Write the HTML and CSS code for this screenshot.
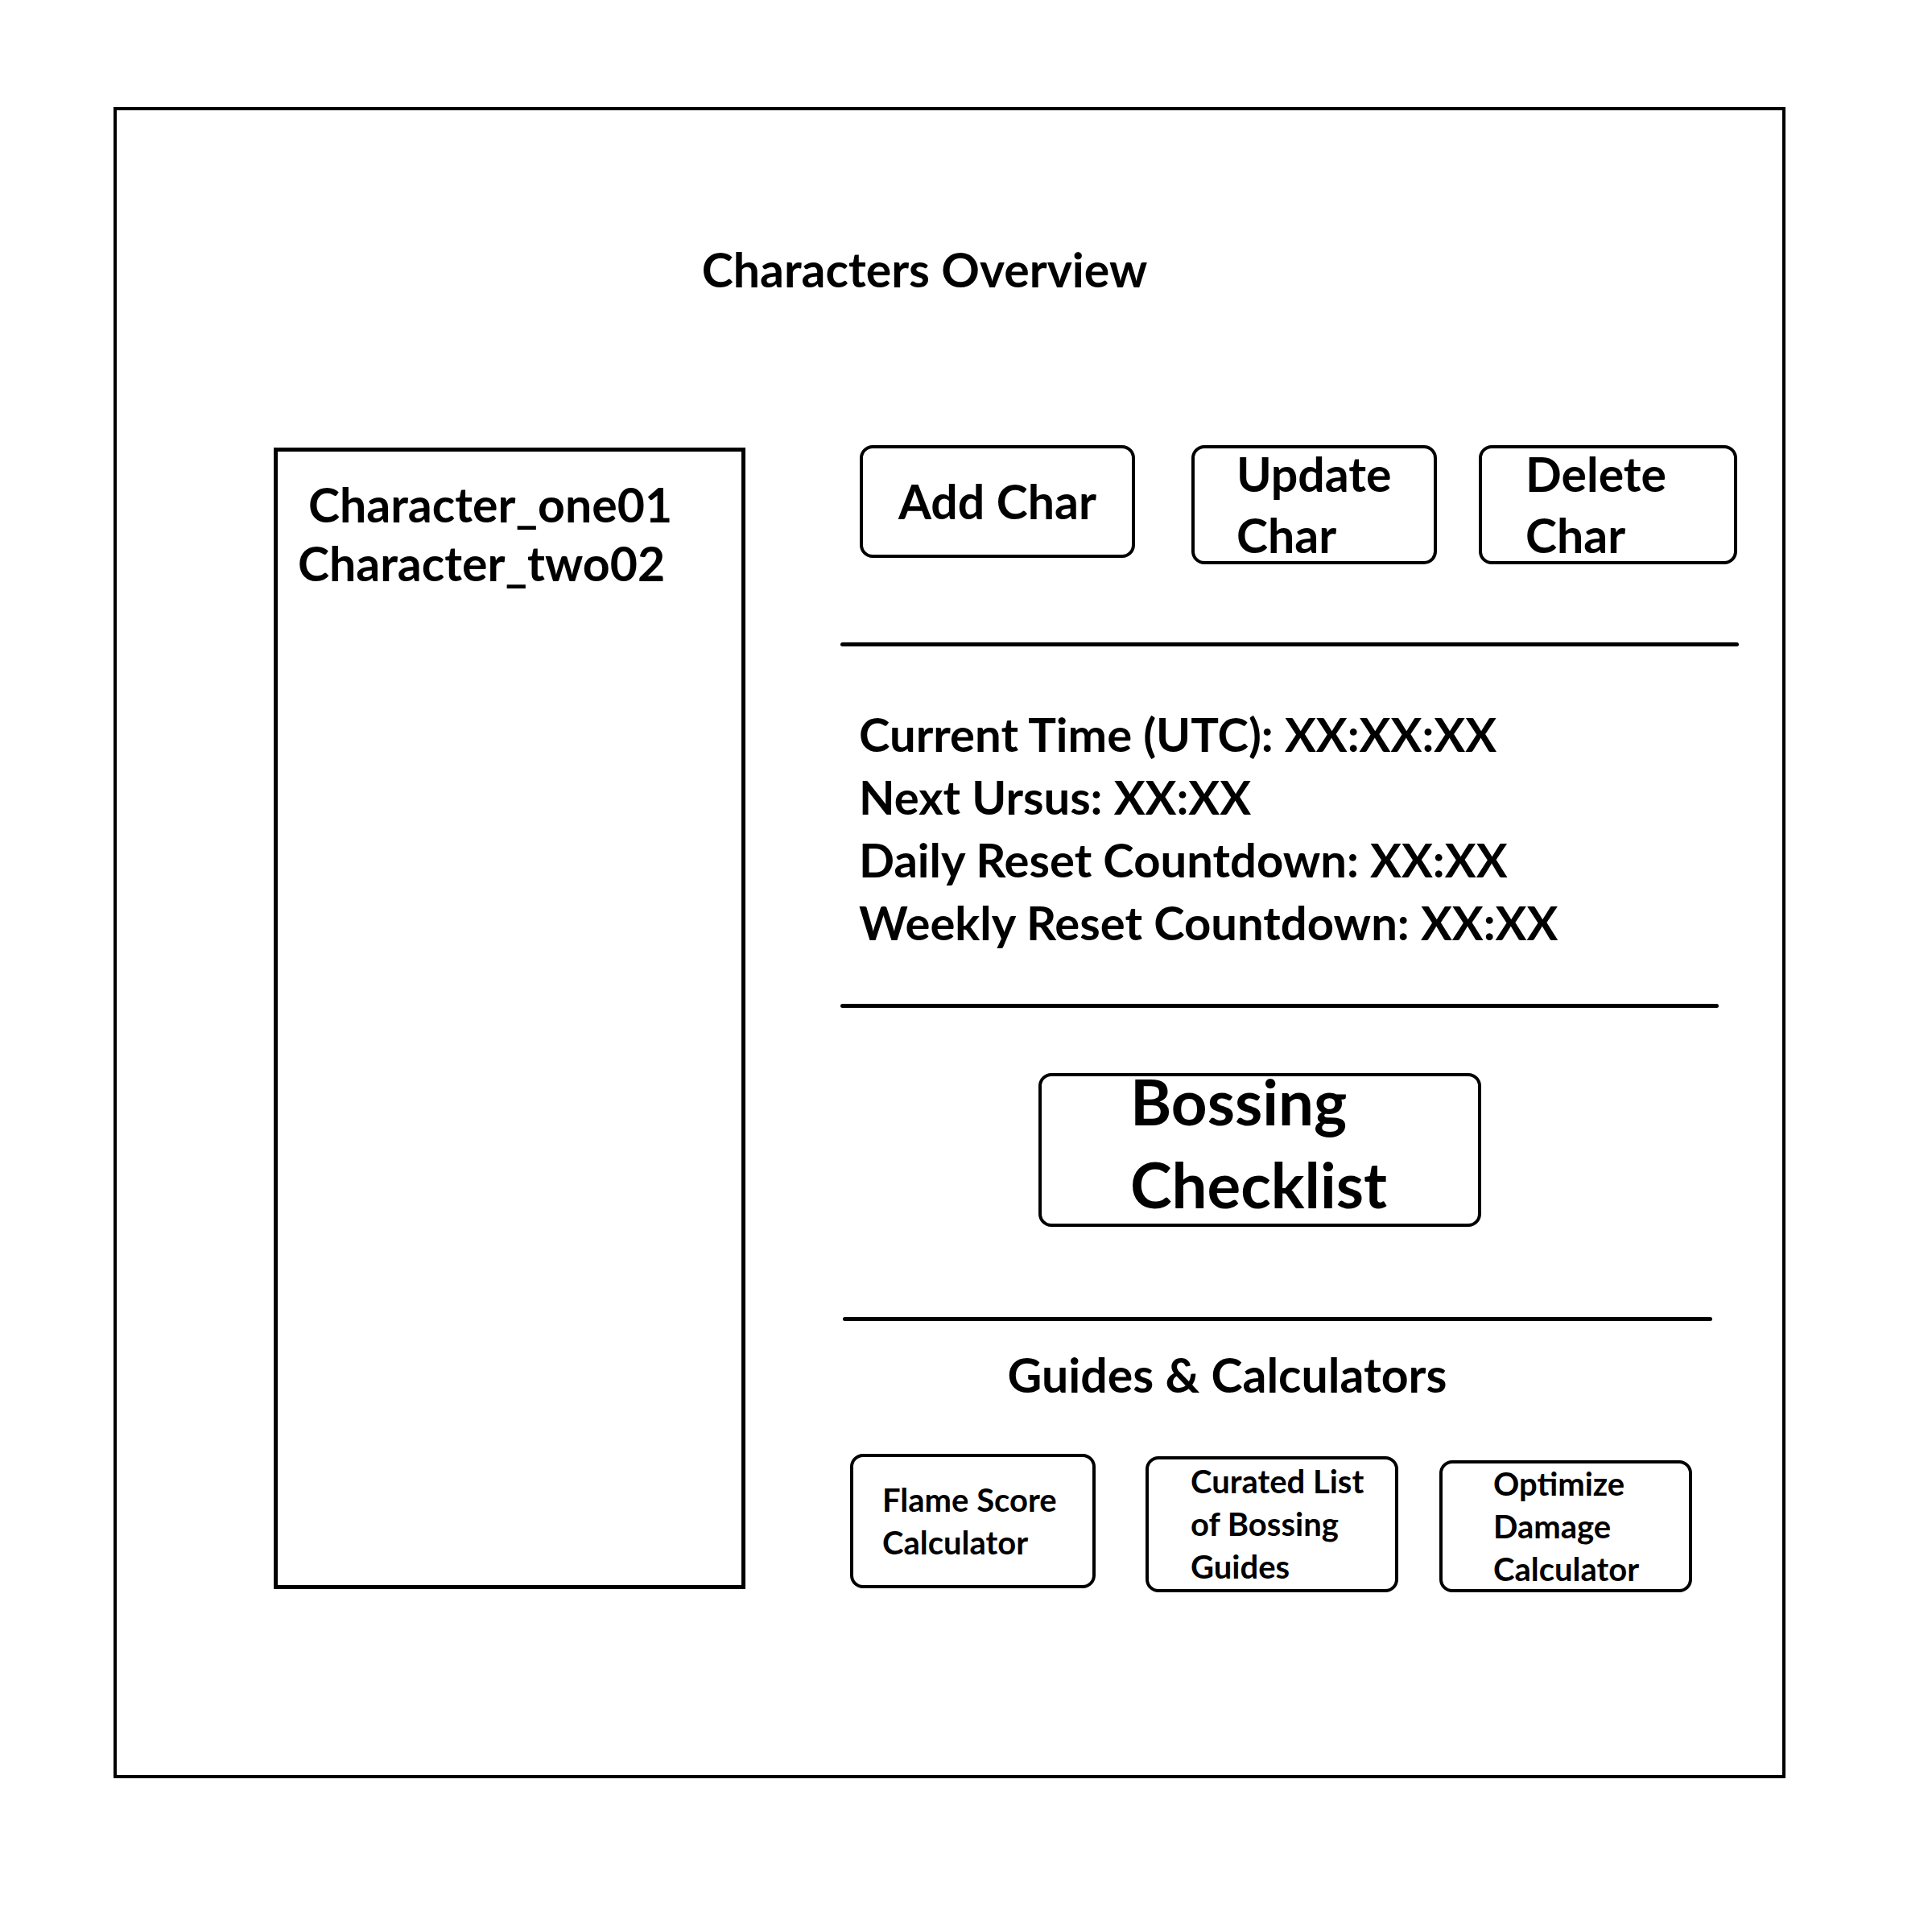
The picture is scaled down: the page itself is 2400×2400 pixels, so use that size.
FILE: index.html
```html
<!DOCTYPE html>
<html lang="en">
<head>
  <meta charset="UTF-8">
  <meta name="viewport" content="width=device-width, initial-scale=1">
  <title>Characters Overview</title>
  <link rel="stylesheet" href="styles.css">
</head>
<body>

  <div class="frame">
    <h1 class="title">Characters Overview</h1>

    <div class="main">
      <ul class="char-list">
        <li class="char-first">Character_one01</li>
        <li>Character_two02</li>
      </ul>

      <div class="panel">
        <div class="char-actions">
          <button class="box-btn btn-add">Add Char</button>
          <button class="box-btn btn-update"><span>Update<br>Char</span></button>
          <button class="box-btn btn-delete"><span>Delete<br>Char</span></button>
        </div>

        <div class="rule rule-one"></div>

        <div class="timers">
          <div>Current Time (UTC): XX:XX:XX</div>
          <div>Next Ursus: XX:XX</div>
          <div>Daily Reset Countdown: XX:XX</div>
          <div>Weekly Reset Countdown: XX:XX</div>
        </div>

        <div class="rule rule-two"></div>

        <button class="box-btn btn-bossing"><span>Bossing<br>Checklist</span></button>

        <div class="rule rule-three"></div>

        <h2 class="guides-title">Guides &amp; Calculators</h2>

        <div class="guides">
          <button class="box-btn guide-btn guide-flame"><span>Flame Score<br>Calculator</span></button>
          <button class="box-btn guide-btn guide-curated"><span>Curated List<br>of Bossing<br>Guides</span></button>
          <button class="box-btn guide-btn guide-damage"><span>Optimize<br>Damage<br>Calculator</span></button>
        </div>
      </div>
    </div>
  </div>

</body>
</html>
```

FILE: styles.css
```css
body {
  margin: 0;
  background-color: #fff;
  color: #000;
  font-family: Lato, 'Open Sans', sans-serif;
  font-weight: 700;
}

.frame {
  box-sizing: border-box;
  width: 2077px;
  height: 2076px;
  margin: 133px 0 0 141px;
  border: 4px solid #000;
}

.title {
  margin: 0;
  padding: 159px 62px 0 0;
  font-size: 59px;
  line-height: 78px;
  font-weight: 700;
  text-align: center;
}

.main {
  display: flex;
  align-items: flex-start;
  margin-top: 179px;
  padding-left: 195px;
}

/* character list */
.char-list {
  box-sizing: border-box;
  width: 586px;
  height: 1418px;
  margin: 3px 0 0 0;
  padding: 29px 0 0 25px;
  list-style: none;
  border: 5px solid #000;
  font-size: 59px;
  line-height: 73px;
}

.char-list .char-first {
  padding-left: 13px;
}

.panel {
  width: 1116px;
  margin-left: 118px;
}

/* bordered buttons */
.box-btn {
  box-sizing: border-box;
  display: flex;
  align-items: center;
  padding: 0;
  border: 4px solid #000;
  border-radius: 16px;
  background: #fff;
  color: #000;
  font-family: inherit;
  font-weight: 700;
  text-align: left;
}

.char-actions {
  display: flex;
  align-items: flex-start;
}

.char-actions .box-btn {
  height: 148px;
  font-size: 59px;
  line-height: 76px;
}

.btn-add {
  width: 342px;
  margin-left: 24px;
  padding-left: 44px !important;
  height: 140px !important;
}

.btn-update {
  width: 305px;
  margin-left: 70px;
  padding-left: 52px !important;
}

.btn-delete {
  width: 321px;
  margin-left: 52px;
  padding-left: 54px !important;
}

.rule {
  height: 5px;
  border-radius: 3px;
  background-color: #000;
}

.rule-one {
  margin-top: 97px;
}

.rule-two {
  width: 1091px;
  margin-top: 62px;
}

.rule-three {
  width: 1080px;
  margin: 112px 0 0 3px;
}

.timers {
  margin-top: 70px;
  padding-left: 23px;
  font-size: 58px;
  line-height: 78px;
}

.btn-bossing {
  width: 550px;
  height: 191px;
  margin: 81px 0 0 246px;
  padding-left: 110px;
  align-items: flex-start;
  font-size: 78px;
  line-height: 103px;
}

.btn-bossing span {
  margin-top: -20px;
}

.guides-title {
  margin: 28px 0 0 0;
  padding-right: 155px;
  font-size: 59px;
  line-height: 78px;
  font-weight: 700;
  text-align: center;
}

.guides {
  display: flex;
  align-items: flex-start;
  margin-top: 59px;
}

.guide-btn {
  width: 314px;
  font-size: 40px;
  line-height: 53px;
}

.guide-flame {
  width: 305px;
  height: 167px;
  margin-left: 12px;
  padding-left: 36px;
}

.guide-curated {
  height: 169px;
  margin: 3px 0 0 62px;
  padding-left: 52px;
}

.guide-damage {
  height: 164px;
  margin: 8px 0 0 51px;
  padding-left: 63px;
}
```
